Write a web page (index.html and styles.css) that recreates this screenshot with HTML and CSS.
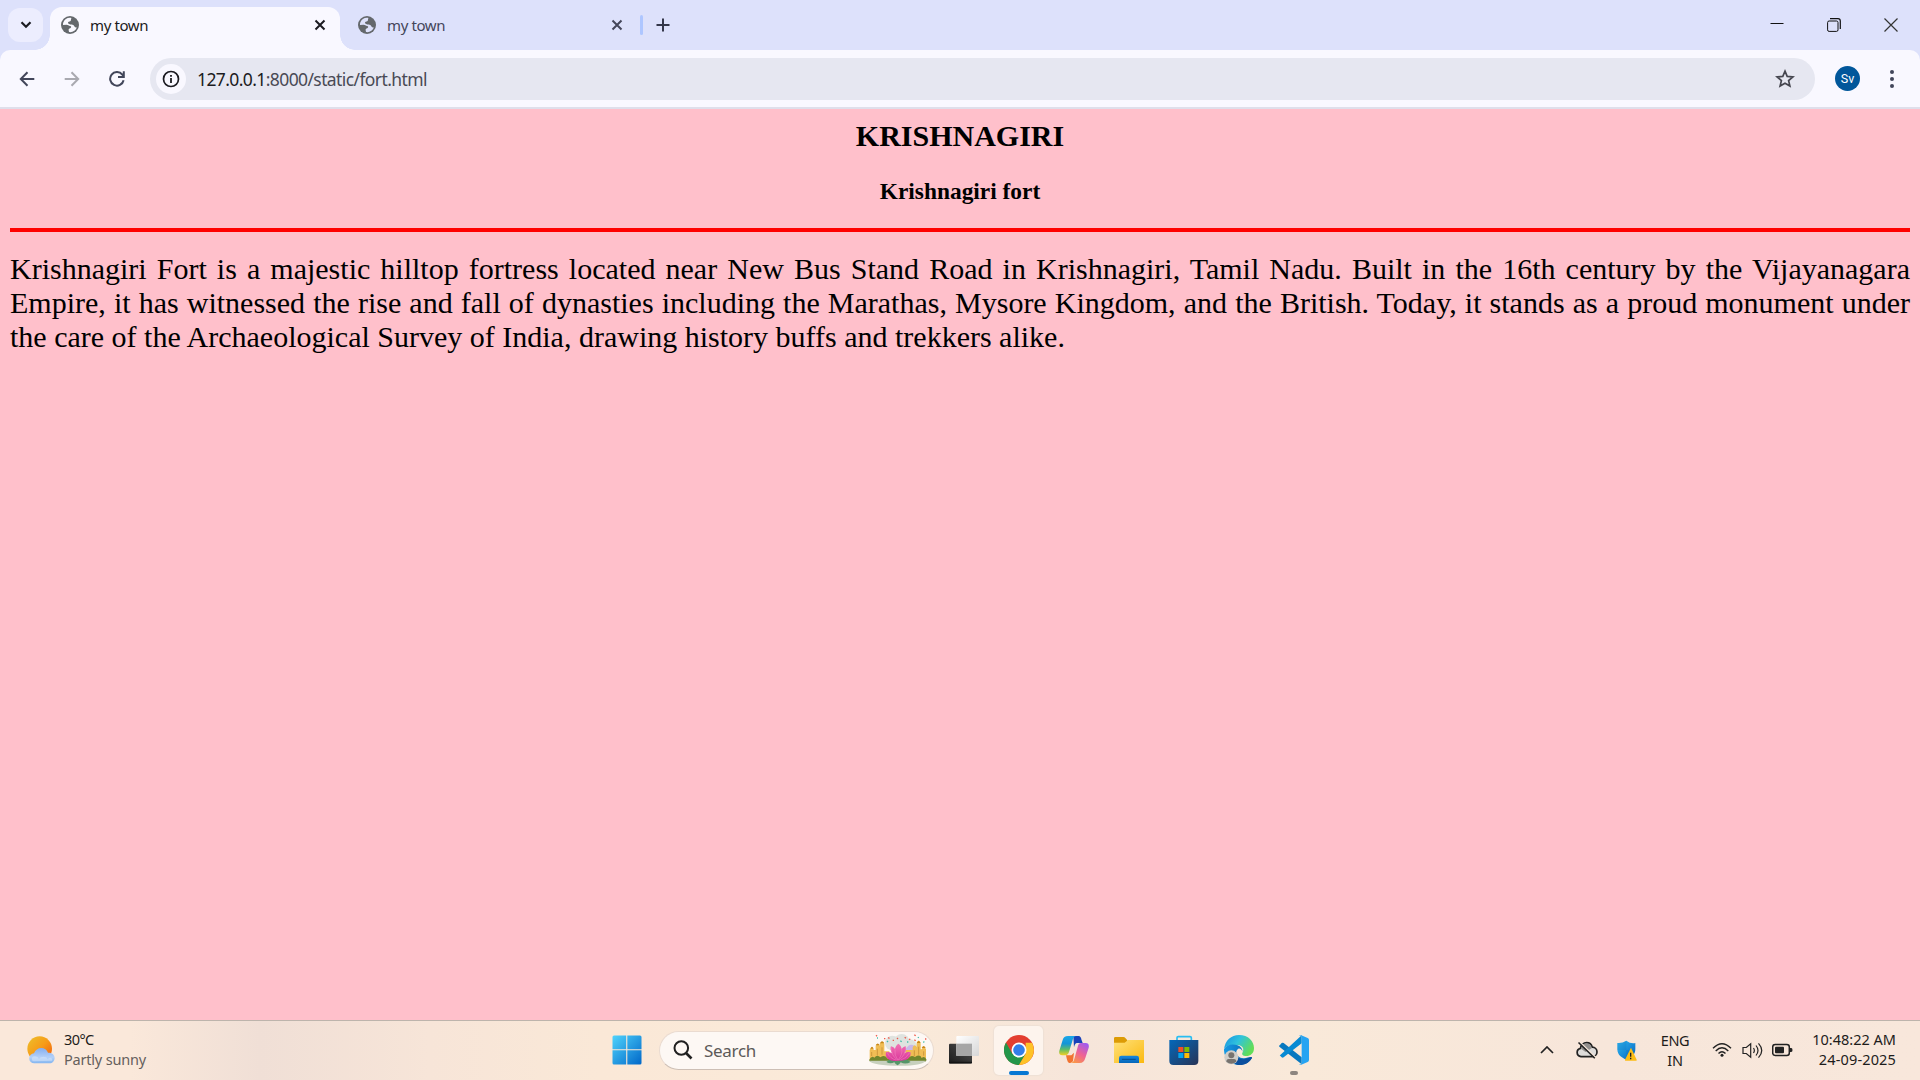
FILE: index.html
```html
<!DOCTYPE html>
<html lang="en">
<head>
<meta charset="utf-8">
<title>my town</title>
<link rel="stylesheet" href="styles.css">
</head>
<body>
<svg class="defs" width="0" height="0">
  <defs>
    <symbol id="globe" viewBox="0 0 20 20"><circle cx="10" cy="10" r="9" fill="#64686c"/><path class="land" d="M11.500 3C7.800 2.200 4.500 4.200 3.300 7.500 3 8.500 2.900 9.200 3 10l3.500-.2c1.600 0 2.200 1.200 3.600 1.300 1.300.1 1.300 1 .7 1.700-.7.800-2 .7-2.200 1.800-.1 1.200.6 1.700.3 2.400 3.600.7 7-1.500 8-4.800-1.300.5-2.200.1-2.600-.9-.5-1.300-1.500-1.500-2.600-1.700C9.800 9.300 8 9 8 7.700c0-1.100 1.300-1.200 2.200-1.500 1.200-.5.5-2.200 1.300-3.200z"/></symbol>
    <symbol id="cross" viewBox="0 0 12 12"><path d="M1.500 1.500l9 9M10.500 1.500l-9 9" fill="none" stroke="currentColor" stroke-width="2"/></symbol>
    <linearGradient id="win" x2="1" y2="1"><stop stop-color="#4fd3fc"/><stop offset="1" stop-color="#0067c8"/></linearGradient>
    <linearGradient id="sun" x1="0" y1="0" x2="1" y2="1"><stop stop-color="#ecc12c"/><stop offset=".5" stop-color="#f79b18"/><stop offset="1" stop-color="#f0570a"/></linearGradient>
    <linearGradient id="cloud" x2="0" y2="1"><stop stop-color="#84aef0"/><stop offset=".6" stop-color="#b4d0f8"/><stop offset="1" stop-color="#84b6f0"/></linearGradient>
    <linearGradient id="dark" x1="1" x2="0" y2="1"><stop stop-color="#505050"/><stop offset="1" stop-color="#1c1c1c"/></linearGradient>
    <linearGradient id="pale" x2="1" y2="1"><stop stop-color="#fff"/><stop offset="1" stop-color="#d6d6d6"/></linearGradient>
    <linearGradient id="cpA" x2="0" y2="1"><stop stop-color="#1ba7e8"/><stop offset=".4" stop-color="#1495d8"/><stop offset=".7" stop-color="#5fbd68"/><stop offset="1" stop-color="#f6cf22"/></linearGradient>
    <linearGradient id="cpB" x1=".8" x2=".2" y2="1"><stop stop-color="#a05af0"/><stop offset=".5" stop-color="#ee6295"/><stop offset="1" stop-color="#fb9a43"/></linearGradient>
    <linearGradient id="fold" x2="1" y2="1"><stop stop-color="#ffe17a"/><stop offset="1" stop-color="#fbb90f"/></linearGradient>
    <linearGradient id="foldb" x2="0" y2="1"><stop stop-color="#1787df"/><stop offset="1" stop-color="#0566b9"/></linearGradient>
    <linearGradient id="store" x2="1" y2="1"><stop stop-color="#0468ba"/><stop offset="1" stop-color="#283456"/></linearGradient>
    <linearGradient id="edgeA" x2="1" y2=".5"><stop stop-color="#158ee3"/><stop offset=".5" stop-color="#30c3dc"/><stop offset="1" stop-color="#62dd58"/></linearGradient>
    <linearGradient id="edgeB" x2="1"><stop stop-color="#169be5"/><stop offset="1" stop-color="#075fae"/></linearGradient>
    <linearGradient id="shield" x2="1" y2="1"><stop stop-color="#31b9f1"/><stop offset="1" stop-color="#0462c0"/></linearGradient>
    <linearGradient id="petal" x2="0" y2="1"><stop stop-color="#f472b4"/><stop offset="1" stop-color="#d9379b"/></linearGradient>
  </defs>
</svg>

<header class="tab-strip">
  <div class="tab-search"><svg width="12" height="8" viewBox="0 0 12 8"><path d="M1.500 1.200L6 5.700l4.500-4.500" fill="none" stroke="#1b1b21" stroke-width="2.200"/></svg></div>
  <div class="tab active">
    <svg class="favicon"><use href="#globe"/></svg><span class="tab-title">my town</span>
    <svg class="tab-close"><use href="#cross"/></svg>
  </div>
  <div class="tab">
    <svg class="favicon"><use href="#globe"/></svg><span class="tab-title">my town</span>
    <svg class="tab-close"><use href="#cross"/></svg>
  </div>
  <div class="tab-divider"></div>
  <svg class="new-tab" width="14" height="14" viewBox="0 0 14 14"><path d="M7 .5v13M.5 7h13" stroke="#34374a" stroke-width="2"/></svg>
  <div class="window-controls">
    <svg width="14" height="14" viewBox="0 0 14 14"><path d="M.5 5.500h13" stroke="#111" stroke-width="1"/></svg>
    <svg width="14" height="14" viewBox="0 0 14 14" fill="none" stroke="#111"><rect x=".6" y="3" width="10.400" height="10.400" rx="1.500"/><path d="M3 .7h8a2.300 2.300 0 0 1 2.300 2.300v8" stroke-width="1.200"/></svg>
    <svg width="14" height="14" viewBox="0 0 14 14"><path d="M.5.5l13 13M13.500.5l-13 13" stroke="#333" stroke-width="1.200"/></svg>
  </div>
</header>

<nav class="toolbar-bed">
  <div class="toolbar">
    <svg class="nav-icon" width="16" height="16" viewBox="0 0 16 16" fill="none" stroke="#42465a" stroke-width="2"><path d="M15.300 8H2M8.500 1.200L1.800 8l6.700 6.800"/></svg>
    <svg class="nav-icon" width="16" height="16" viewBox="0 0 16 16" fill="none" stroke="#a9a9b0" stroke-width="2"><path d="M.7 8H14M7.500 1.200L14.200 8l-6.700 6.800"/></svg>
    <svg class="nav-icon" width="16" height="16" viewBox="0 0 16 16" fill="none" stroke="#42465a" stroke-width="2"><path d="M14.600 9.200A6.800 6.800 0 1 1 13.300 3.600L14.800 5.300M14.800.3v5.700H9"/></svg>
    <div class="address">
      <div class="site-info"><svg width="18" height="18" viewBox="0 0 18 18"><circle cx="9" cy="9" r="7.500" fill="none" stroke="#1b1b21" stroke-width="1.700"/><path d="M9 8v5M9 4.900v1.800" stroke="#1b1b21" stroke-width="1.800"/></svg></div>
      <span class="url"><span class="host">127.0.0.1</span>:8000/static/fort.html</span>
      <svg class="star" width="20" height="20" viewBox="0 0 20 20"><path d="M10 2.200l2.200 5.200 5.700.5-4.300 3.700 1.300 5.500L10 14.200l-4.900 2.900 1.300-5.500-4.300-3.700 5.700-.5z" fill="none" stroke="#45464f" stroke-width="1.700"/></svg>
    </div>
    <div class="profile">Sv</div>
    <svg class="menu" width="6" height="20" viewBox="0 0 6 20" fill="#42465a"><circle cx="3" cy="3" r="2"/><circle cx="3" cy="10" r="2"/><circle cx="3" cy="17" r="2"/></svg>
  </div>
</nav>

<main class="page">
  <h1>KRISHNAGIRI</h1>
  <h2>Krishnagiri fort</h2>
  <hr>
  <p>Krishnagiri Fort is a majestic hilltop fortress located near New Bus Stand Road in Krishnagiri, Tamil Nadu. Built in the 16th century by the Vijayanagara Empire, it has witnessed the rise and fall of dynasties including the Marathas, Mysore Kingdom, and the British. Today, it stands as a proud monument under the care of the Archaeological Survey of India, drawing history buffs and trekkers alike.</p>
</main>

<footer class="taskbar">
  <div class="weather">
    <svg width="28" height="28" viewBox="0 0 84 84"><circle cx="38" cy="38" r="37" fill="url(#sun)"/><path d="M22 82a15 15 0 0 1-1-30c4-10 12-16 22-16 9 0 17 5 20 14 12-1 20 7 20 16s-7 16-15 16z" fill="url(#cloud)"/><path d="M20 76c-7-1-8-14 2-15 8 0 12 3 14 8 4-8 22-9 26 0 7-8 17-1 13 5z" fill="#d7e7fc" opacity=".55"/></svg>
    <div class="weather-text"><span class="temp">30°C</span><span class="sky">Partly sunny</span></div>
  </div>

  <div class="apps">
    <svg class="start" width="30" height="30" viewBox="0 0 30 30" fill="url(#win)"><path d="M2 .5h12.200v13.700H.5V2A1.500 1.500 0 0 1 2 .5zM15.300.5H28A1.500 1.500 0 0 1 29.500 2v12.200H15.300zM.5 15.300h13.700v14.200H2A1.500 1.500 0 0 1 .5 28zM15.300 15.300h14.200V28a1.500 1.500 0 0 1-1.500 1.500H15.300z"/></svg>
    <div class="search">
      <svg width="20" height="20" viewBox="0 0 20 20" fill="none" stroke="#202020"><circle cx="8.300" cy="8" r="6.800" stroke-width="2"/><path d="M13 13l5.500 5.500" stroke-width="2.600"/></svg>
      <span class="search-label">Search</span>
      <svg class="lotus" width="58" height="32" viewBox="0 0 174 96">
        <g fill="#dfe3df"><circle cx="70" cy="27" r="22"/><circle cx="98" cy="23" r="23"/><circle cx="122" cy="38" r="22"/></g>
        <path d="M108 48q19-32 38 0z" fill="#c9b8e8"/>
        <path d="M2 80V48q6-13 13 0h5V36q6-12 12 0v-6q7-14 14 0v22h15v29zM109 80V48h22v-8q6-13 12 0V28q6-17 12 0v18h3q6-14 13 0v34z" fill="#f0bd55"/>
        <path d="M4 44q5-11 10 0M20 34q6-11 12 0M33 28q6-12 13 0M143 27q6-12 12 0M158 42q6-12 12 0" fill="#c88718"/>
        <path d="M8 54v12M25 44v20M39 40v22M136 49v17M149 38v24M164 52v13" stroke="#bd8530" stroke-width="2"/>
        <path d="M0 79q7-16 16-8 9-11 18-1 14-10 22 4h60q9-13 22-5 15-10 20 3 9-9 15 6l-5 6H5z" fill="#71862d"/>
        <path d="M0 80h170q-10 15-76 15Q12 95 0 80z" fill="#c7d0be"/>
        <path d="M52 84q15-16 35-4 20-12 38 4-16 9-30 1-9 17-19 0-12 6-24-1z" fill="#559669"/>
        <path d="M87 80C55 85 46 65 52 54c9-1 15 2 17 4-5-9-5-15-3-21 6 1 10 5 12 8 1-7 5-12 10-16 6 4 9 9 10 16 4-5 8-7 12-8 2 7 1 14-3 21 5-4 10-5 17-4 4 14-9 29-37 26z" fill="url(#petal)"/>
        <path d="M66 38q1 29 20 40M110 38q-1 29-21 40M78 46q-3 19 9 32 15-18 11-33M54 55q10 20 28 23M123 55q-12 20-28 23" fill="none" stroke="#f488c0" stroke-width="1.500"/>
        <path d="M21 4l3 3M45 14h4M58 10l3 4M71 19h4M84 12l3 3M107 10l4 3M120 17l4-2M136 2l4 3M136 17l4 3M172 15h-4" stroke="#f05b4b" stroke-width="4"/><path d="M24 12h3M54 21l3 3M94 20l4 3M114 24h4M147 9l2 3M163 23l3 2" stroke="#42bea9" stroke-width="4"/>
      </svg>
    </div>
    <div class="app"><svg class="app-icon" viewBox="0 0 90 90"><rect x="0" y="26" width="69" height="60" rx="3" fill="url(#dark)"/><path d="M0 82h69" stroke="#111" stroke-width="3"/><rect x="22" y="3" width="68" height="60" rx="3" fill="url(#pale)"/><path d="M22 26h47v37H22z" fill="#a6a6a6"/></svg></div>
    <div class="app current"><svg class="app-icon" viewBox="0 0 90 90"><circle cx="45" cy="45" r="45" fill="#e33e30"/><path d="M6 22.500A45 45 0 0 0 45 90L66 55 45 66 25 56z" fill="#239649"/><path d="M84 23A45 45 0 0 1 45 90L65 56V23z" fill="#fec227"/><path d="M45 23h39H65z" fill="#fec227"/><circle cx="45" cy="45" r="22.500" fill="#fff"/><circle cx="45" cy="45" r="17.500" fill="#337ee9"/></svg></div>
    <div class="app"><svg class="app-icon" viewBox="0 0 90 90"><path d="M43 3h14c8 0 9 5 11 13l3 8H55c-7 0-8 7-10 13z" fill="#1942ba"/><path d="M27 3h24c-7 1-9 8-11 15L30 51c-2 7-6 10-13 10H10C2 61-1 56 1 47L11 15C13 7 18 3 27 3z" fill="url(#cpA)"/><path d="M21 61h16l8-8-3 25c-3 5-7 6-11 6-5-1-7-8-10-23z" fill="#f17331"/><path d="M66 24h14c8 0 11 6 9 14L79 69c-3 10-8 15-17 15H32c9 0 12-4 14-12l10-36c2-8 4-12 10-12z" fill="url(#cpB)"/></svg></div>
    <div class="app"><svg class="app-icon" viewBox="0 0 90 90"><path d="M0 10q0-4 4-4h24q4 0 6 3l6 7v14H0z" fill="#dc9b05"/><path d="M0 23h32l10-8h48v69H0z" fill="url(#fold)"/><path d="M15 84V69q0-7 7-7h46q7 0 7 7v15z" fill="url(#foldb)"/><path d="M25 73h39" stroke="#064c8d" stroke-width="3" stroke-linecap="round"/></svg></div>
    <div class="app"><svg class="app-icon" viewBox="0 0 90 90"><path d="M24 20V8q0-3 4-3h35q4 0 4 3v12" fill="none" stroke="#29bdf1" stroke-width="5"/><path d="M1 15h87v63q0 12-12 12H13Q1 90 1 78z" fill="url(#store)"/><path d="M28 36h15v15H28z" fill="#f25026"/><path d="M46 36h15v15H46z" fill="#80bb01"/><path d="M28 54h15v15H28z" fill="#02a5ef"/><path d="M46 54h15v15H46z" fill="#ffba06"/></svg></div>
    <div class="app"><svg class="app-icon" viewBox="0 0 90 90"><path d="M0 43C3 16 22 0 45 0c28 0 45 19 45 39 0 17-11 24-23 24-11 0-14-5-12-9 8-13-1-24-14-24C22 29 4 32 0 43z" fill="url(#edgeA)"/><path d="M0 43c8-15 26-17 41-12 10 3 15 12 14 19-2-8-8-11-13-8-12 9-2 29 18 28 12-1 22-8 24-1C75 84 61 90 45 90 20 90-1 69 0 43z" fill="url(#edgeB)"/><path d="M35 48c-3 17 15 28 29 24 11-3 20-10 20-4-8 16-24 24-42 22-20-5-22-26-7-42z" fill="#0b4f9e"/><circle cx="22" cy="67" r="21" fill="#d0cec9"/><circle cx="22" cy="61" r="9" fill="#77736f"/><path d="M7 80q0-8 7-8h16q7 0 7 8-15 12-30 0z" fill="#77736f"/></svg></div>
    <div class="app running"><svg class="app-icon" viewBox="0 0 90 90"><path d="M3 30l5-6q3-2 6 0l54 43v21L2 36q-4-3 1-6z" fill="#0878bf"/><path d="M3 61L68 1v24L14 67q-3 2-6 0l-6-6z" fill="#078ad3"/><path d="M65 0l21 9q4 2 4 6v60q0 4-4 6l-21 9q-3 0-5-3 8 4 8-4V7q0-8-8-4 2-3 5-3z" fill="#26a4f2"/></svg></div>
  </div>

  <div class="tray">
    <svg class="chevron" width="14" height="8" viewBox="0 0 14 8"><path d="M1 7l6-6 6 6" fill="none" stroke="#222" stroke-width="1.700"/></svg>
    <svg class="cloud-off" width="22" height="18" viewBox="0 0 22 18"><path d="M5 15.600a4.200 4.200 0 0 1-.5-8.300C5 3.800 7.700 1.600 10.600 1.600c3 0 5 1.800 5.700 4.600A4.700 4.700 0 0 1 16.300 15.600z" fill="#dedcda" stroke="#222" stroke-width="1.700"/><path d="M5.300 8C5.500 4.500 8 2.500 10.600 2.500c3 0 4.800 2 5.100 4.700L9.500 11z" fill="#918f8d"/><path d="M3.500.8l16 15.500" stroke="#f7e7da" stroke-width="1.600"/><path d="M2.500 1.500l16.300 15.800" stroke="#222" stroke-width="1.600"/></svg>
    <svg class="shield" width="20" height="21" viewBox="0 0 60 63"><path d="M28 2q13 10 27 7v19c0 18-15 25-27 32C15 53 1 46 1 28V9q14 2 27-7z" fill="url(#shield)"/><path d="M1 30h27V2Q15 11 1 9zM28 30h27q0 20-27 30z" fill="#08549e" opacity=".15"/><path d="M42 23l17 36q1 3-2 3H26q-3 0-2-3z" fill="#fdbd16"/><path d="M41 38v12M41 53v5" stroke="#202020" stroke-width="4"/></svg>
    <div class="lang"><span>ENG</span><span>IN</span></div>
    <svg class="wifi" width="20" height="16" viewBox="0 0 20 16" fill="none" stroke="#222" stroke-width="1.400"><path d="M1 6.300q9-9 18 0M3.700 9q6.300-6.300 12.600 0M6.500 11.600q3.500-3.500 7 0"/><circle cx="10" cy="13.300" r="1.500" fill="#222" stroke="none"/></svg>
    <svg class="volume" width="21" height="17" viewBox="0 0 21 17" fill="none" stroke="#222" stroke-width="1.200"><path d="M1 5.500h3.300L8.700 1.700v13.600L4.300 11.500H1zM11.500 6q1.700 2.500 0 5M14 3.500q4 5 0 10M16.500 1.300q6.500 7.200 0 14.400"/></svg>
    <svg class="battery" width="21" height="14" viewBox="0 0 21 14"><rect x=".7" y="1.500" width="16.600" height="11" rx="2.500" fill="none" stroke="#222" stroke-width="1.500"/><rect x="3" y="3.700" width="9" height="6.600" rx="1" fill="#222"/><path d="M18 5h1.200q1.300 0 1.300 2t-1.300 2H18z" fill="#222"/></svg>
    <div class="clock"><span>10:48:22 AM</span><span class="date">24-09-2025</span></div>
  </div>
</footer>
</body>
</html>
```

FILE: styles.css
```css
* { box-sizing: border-box; }

body {
  margin: 0;
  width: 1920px;
  height: 1080px;
  overflow: hidden;
  display: flex;
  flex-direction: column;
  font-family: "Noto Sans", "Open Sans", sans-serif;
}

svg { display: block; flex: none; }
.defs { position: absolute; }

/* Tabs */
.tab-strip {
  height: 50px;
  flex: none;
  display: flex;
  background: #dde1fb;
}
.tab-search {
  width: 35px;
  height: 34px;
  margin: 8px 7px 0 8px;
  border-radius: 12px;
  background: #ecedfe;
  display: flex;
  align-items: center;
  justify-content: center;
}
.tab {
  width: 297px;
  padding: 0 14px 0 17px;
  display: flex;
  align-items: center;
  color: #44465a;
  --land: #dde1fb;
}
.tab.active {
  position: relative;
  width: 290px;
  height: 43px;
  margin-top: 7px;
  padding: 0 14px 7px 10px;
  border-radius: 12px 12px 0 0;
  background: #f9f8ff;
  color: #1b1b21;
  --land: #f9f8ff;
}
.tab.active::before,
.tab.active::after {
  content: "";
  position: absolute;
  bottom: 0;
  width: 15px;
  height: 15px;
}
.tab.active::before { left: -15px; background: radial-gradient(circle at 0 0, transparent 14.500px, #f9f8ff 15px); }
.tab.active::after { right: -15px; background: radial-gradient(circle at 100% 0, transparent 14.500px, #f9f8ff 15px); }
.favicon { width: 20px; height: 20px; }
.land { fill: var(--land); }
.tab-title {
  flex: 1;
  margin-left: 10px;
  font-size: 15px;
  letter-spacing: -0.4px;
  line-height: 20px;
}
.tab-close { width: 12px; height: 12px; }
.tab-divider {
  width: 3px;
  height: 20px;
  margin: 15px 0 0 3px;
  border-radius: 2px;
  background: #aec6ff;
}
.new-tab { margin: 18px 0 0 13px; }
.window-controls {
  display: flex;
  gap: 43px;
  margin: 18px 22px 0 auto;
}

/* Address bar */
.toolbar-bed { flex: none; background: #dde1fb; }
.toolbar {
  height: 59px;
  padding: 0 25px 0 19px;
  display: flex;
  align-items: center;
  background: #f9f8ff;
  border-bottom: 2px solid #dfdfeb;
  border-radius: 10px 10px 0 0;
}
.nav-icon { margin-right: 29px; }
.address {
  flex: 1;
  height: 42px;
  margin-left: -4px;
  padding: 0 20px 0 6px;
  border-radius: 21px;
  background: #e6e7f1;
  display: flex;
  align-items: center;
}
.site-info {
  width: 30px;
  height: 30px;
  border-radius: 50%;
  background: #f9f8ff;
  display: flex;
  align-items: center;
  justify-content: center;
}
.url {
  margin-left: 11px;
  padding-top: 1px;
  font-size: 17.500px;
  letter-spacing: -0.6px;
  color: #494a55;
}
.host { color: #1b1b21; }
.star { margin-left: auto; }
.profile {
  width: 25px;
  height: 25px;
  margin: 0 29px 0 20px;
  border-radius: 50%;
  background: #01579b;
  color: #fff;
  font: 12.500px/25px Roboto, sans-serif;
  text-align: center;
}

/* Web page */
.page {
  flex: 1;
  padding: 0 10px;
  background: #ffc0cb;
  color: #000;
  font-family: "Liberation Serif", "Times New Roman", serif;
  font-size: 30px;
}
h1 { margin: 10px 0 0; font-size: 30px; line-height: 34px; text-align: center; }
h2 { margin: 25px 0 0; font-size: 23.400px; line-height: 27px; text-align: center; }
hr { height: 4px; margin: 23px 0 0; border: 0; background: #f00; }
p { margin: 20px 0 0; line-height: 34px; text-align: justify; }

/* Taskbar */
.taskbar {
  height: 60px;
  flex: none;
  display: flex;
  align-items: center;
  padding-bottom: 1px;
  border-top: 1px solid #bdb4ac;
  background: linear-gradient(90deg, #fae8da 0, #fae8da 130px, #f0dfd6 260px, #f7e5d8 430px, #fae8d7 600px, #faead9 900px, #f6e5da 1080px, #f9e9d9 1300px, #f7e6da 1600px, #f8e7db 100%);
  color: #1d1c1b;
  font-size: 14.500px;
}
.weather { width: 612px; padding-left: 27px; display: flex; align-items: center; }
.weather-text { display: flex; flex-direction: column; margin-left: 9px; line-height: 20px; padding-bottom: 3px; }
.temp { letter-spacing: -0.6px; }
.sky { color: #65605c; letter-spacing: -0.2px; }
.apps { display: flex; align-items: center; }
.search {
  width: 275px;
  height: 39px;
  margin: 0 2px 0 17px;
  padding: 0 6px 0 13px;
  border: 1px solid #eadbd0;
  border-bottom-color: #cdbfb5;
  border-radius: 20px;
  background: #fdf8f4;
  display: flex;
  align-items: center;
}
.search-label { margin-left: 11px; font-size: 17px; letter-spacing: -0.3px; color: #5c5a58; }
.lotus { margin-left: auto; }
.app {
  width: 49px;
  height: 49px;
  margin: 0 3px;
  position: relative;
  display: flex;
  align-items: center;
  justify-content: center;
}
.app-icon { width: 30px; height: 30px; }
.current { background: #fdf4ed; border-radius: 5px; box-shadow: 0 0 1px 1px #eee0d5; }
.current::after,
.running::after {
  content: "";
  position: absolute;
  bottom: 0;
  width: 20px;
  height: 4px;
  border-radius: 2px;
  background: #0878d3;
}
.running::after { width: 8px; background: #8d857f; }
.tray { display: flex; align-items: center; margin: 0 24px 0 auto; }
.cloud-off { margin-left: 22px; }
.shield { margin-left: 19px; }
.lang, .clock { display: flex; flex-direction: column; line-height: 20px; }
.lang { width: 40px; margin-left: 18px; align-items: center; letter-spacing: -0.3px; }
.wifi { margin-left: 17px; }
.volume { margin-left: 10px; }
.battery { margin-left: 9px; }
.clock { width: 86px; margin-left: 17px; padding-bottom: 2px; align-items: flex-end; white-space: nowrap; letter-spacing: 0; }
.date { letter-spacing: 0.15px; }
```
